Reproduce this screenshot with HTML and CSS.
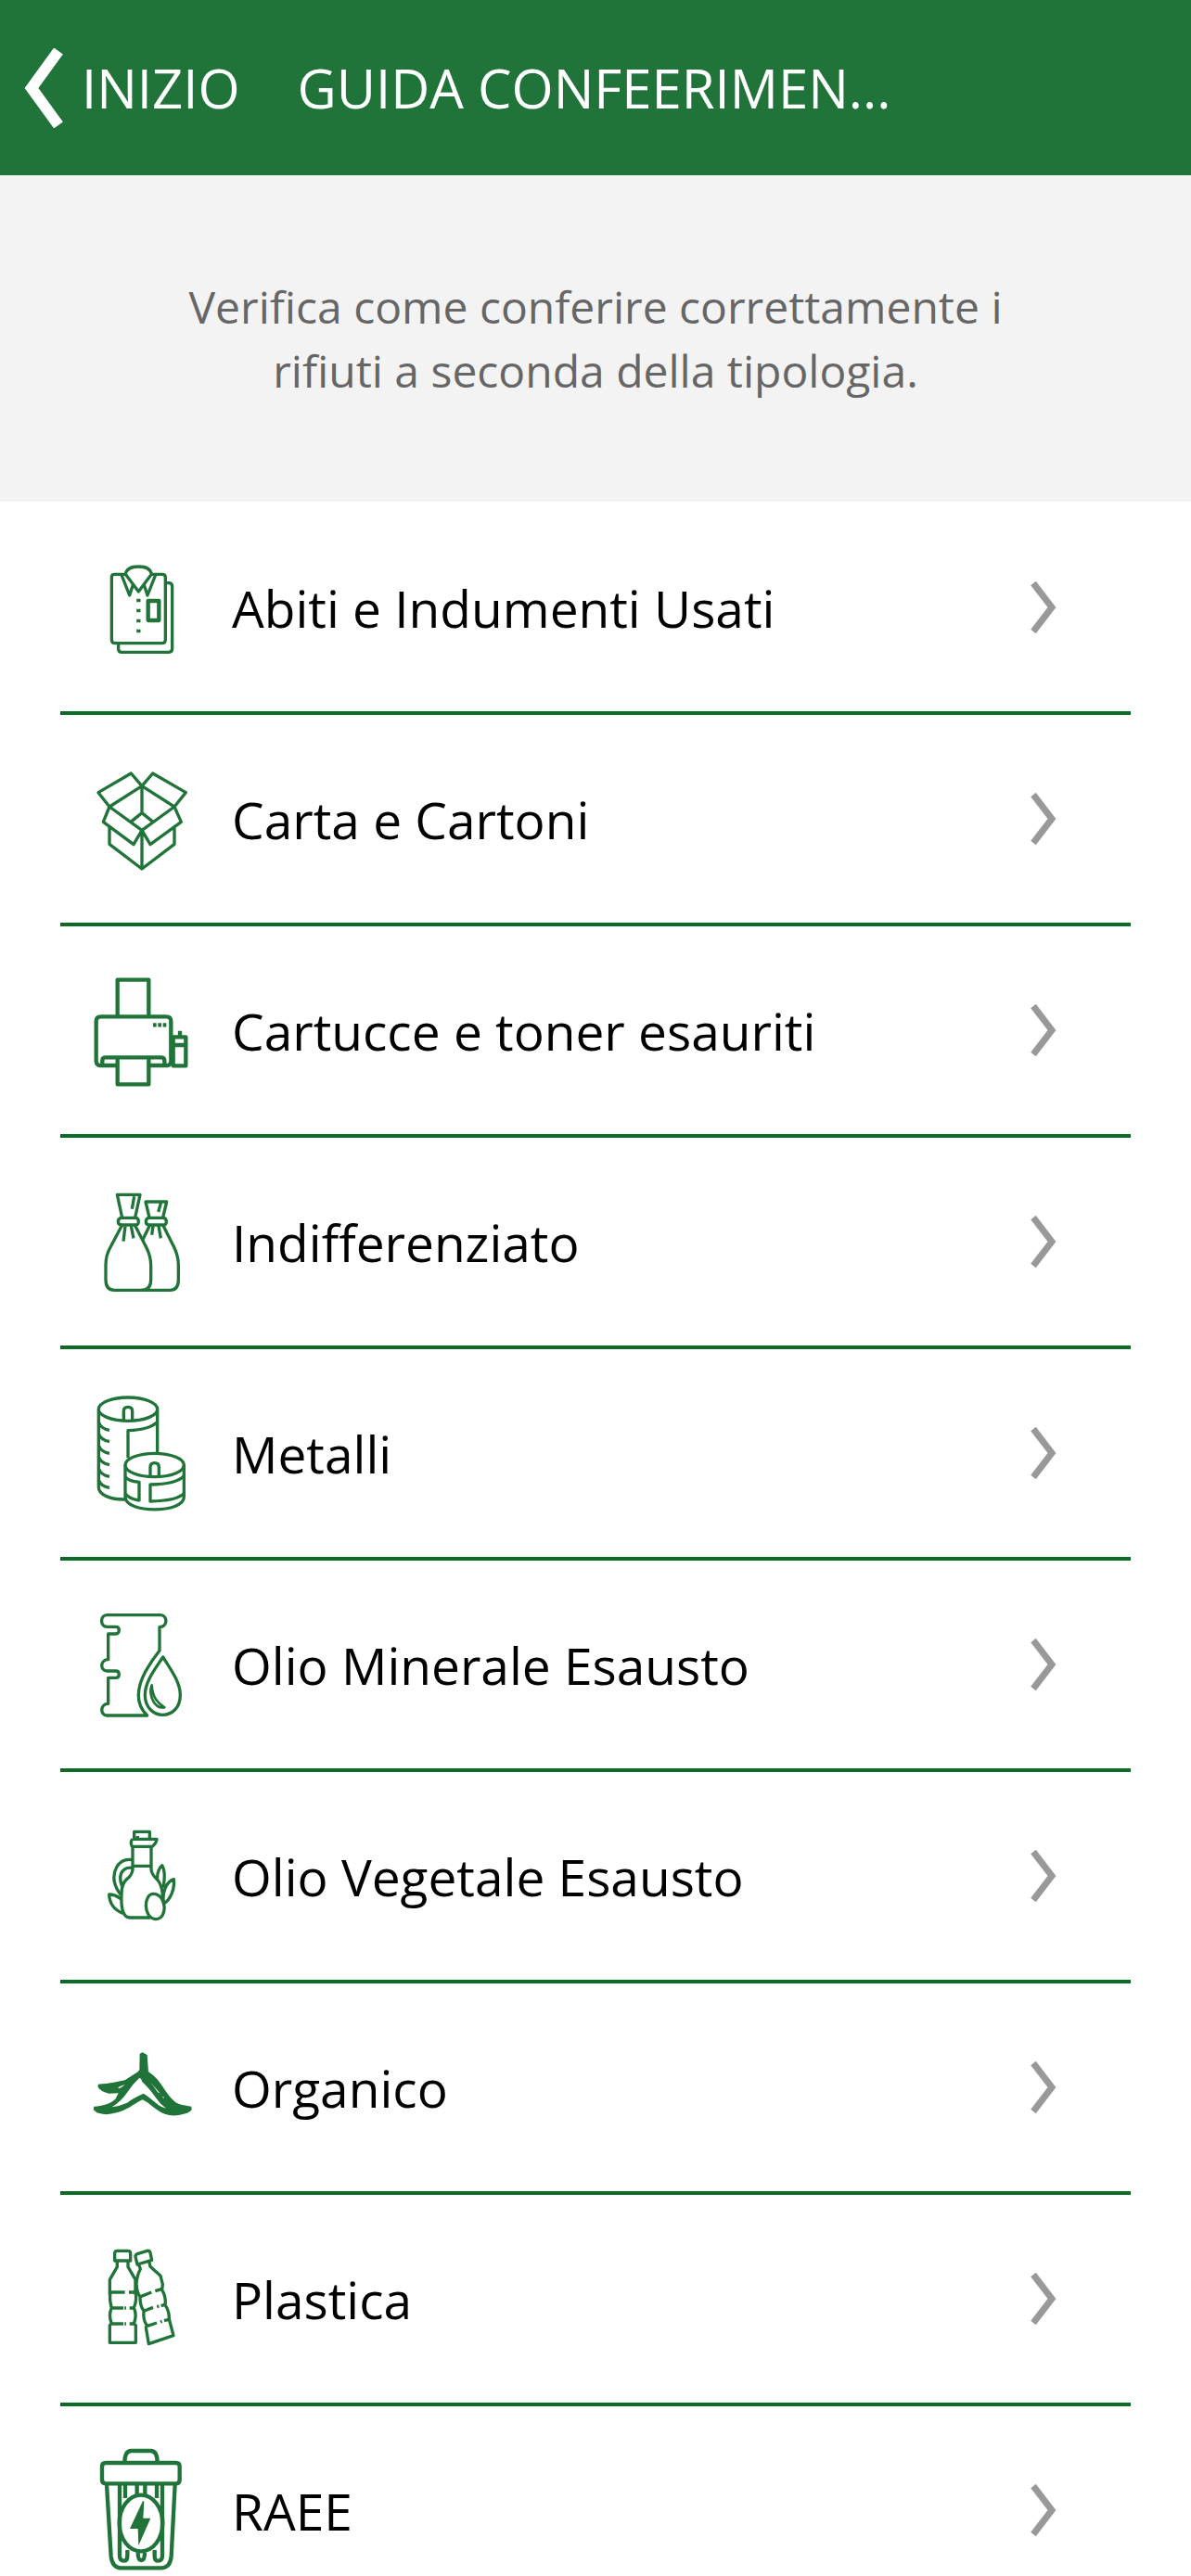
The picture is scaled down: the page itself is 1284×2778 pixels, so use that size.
FILE: index.html
```html
<!DOCTYPE html>
<html lang="it">
<head>
    <meta charset="UTF-8">
    <meta name="viewport" content="width=device-width, initial-scale=1.0">
    <title>Guida conferimento</title>
    <link rel="stylesheet" href="styles.css">
</head>
<body>

<!-- Barra superiore -->
<header class="topbar">
    <a class="back" href="#">
        <svg class="back-icon" viewBox="0 0 42 86" aria-hidden="true"><path d="M37 3L8 43L37 83"/></svg>
        INIZIO
    </a>
    <h1>GUIDA CONFEERIMEN...</h1>
</header>

<p class="intro">Verifica come conferire correttamente i rifiuti a seconda della tipologia.</p>

<!-- Elenco delle tipologie -->
<ul class="list">
    <li>
        <a class="item" href="#">
            <svg class="icon" viewBox="0 0 450 450" aria-hidden="true">
                <path d="M166 118H130Q121 118 121 128V330Q121 341 132 341H284Q295 341 295 330V128Q295 118 285 118H250"/>
                <path d="M297 146H306Q317 146 317 158V358Q317 370 306 370H154Q143 370 143 360V343"/>
                <path d="M166 118Q170 93 208 93T250 118L208 174ZM153 120L179 186L190 152M263 120L237 186L226 152"/>
                <path class="thick" d="M239 204H274V267H239Z"/>
                <path class="thick" d="M208 197V208M208 230V241M208 263V274M208 296V307"/>
            </svg>
            <span class="name">Abiti e Indumenti Usati</span>
            <svg class="arrow" viewBox="0 0 28 58" aria-hidden="true"><path d="M3 3L23 29L3 55"/></svg>
        </a>
    </li>
    <li>
        <a class="item" href="#">
            <svg class="icon" viewBox="0 -6 450 450" aria-hidden="true">
                <path d="M219 113L184 72L78 134L114 180L219 113L324 180L361 134L254 72L219 113V200M114 180L94 229L192 302L219 256L114 180M324 180L346 229L246 302L219 256L324 180M183 229L219 200L255 229M114 246V301L219 381L324 301V246M219 256V381"/>
            </svg>
            <span class="name">Carta e Cartoni</span>
            <svg class="arrow" viewBox="0 0 28 58" aria-hidden="true"><path d="M3 3L23 29L3 55"/></svg>
        </a>
    </li>
    <li>
        <a class="item" href="#">
            <svg class="icon thick" viewBox="0 -12 450 450" aria-hidden="true">
                <path d="M140 168V50H241V168M140 327H85Q71 327 71 312V184Q71 169 86 169H298Q313 169 313 184V312Q313 327 300 327H241"/>
                <path d="M91 325V311Q91 301 102 301H281Q292 301 292 311V325M140 302V388H241V302"/>
                <path d="M320 235H361V328H320ZM320 261H361M342 215V234M255 196H266M271 196H282M287 196H298"/>
            </svg>
            <span class="name">Cartucce e toner esauriti</span>
            <svg class="arrow" viewBox="0 0 28 58" aria-hidden="true"><path d="M3 3L23 29L3 55"/></svg>
        </a>
    </li>
    <li>
        <a class="item" href="#">
            <svg class="icon" viewBox="0 -3 450 450" aria-hidden="true">
                <path d="M155 144L139 70H213L197 144M194 76L187 116M153 145H198Q208 145 208 157T198 168H153Q142 168 142 157T153 145"/>
                <path d="M154 170L117 240Q102 266 102 298V345Q102 379 130 379H218Q248 379 248 345V298Q248 270 233 240L197 170M165 172L159 221M184 172L192 211"/>
                <path d="M243 144L231 93H299L287 144M280 98L272 126M242 145H287Q298 145 298 157T287 168H242Q232 168 232 157T242 145M244 170L220 219M288 170L323 240Q337 269 337 298V345Q337 379 310 379H218M255 172L251 200M273 172L280 211"/>
            </svg>
            <span class="name">Indifferenziato</span>
            <svg class="arrow" viewBox="0 0 28 58" aria-hidden="true"><path d="M3 3L23 29L3 55"/></svg>
        </a>
    </li>
    <li>
        <a class="item" href="#">
            <svg class="icon" viewBox="0 6 450 450" aria-hidden="true">
                <ellipse cx="174" cy="89" rx="95" ry="38"/>
                <path d="M79 89V342C79 366 118 382 164 381M269 89V232M174 247V158Q245 155 269 130M160 125V96Q160 82 174 82T188 96V125"/>
                <path d="M79 130Q85 152 114 157M79 167Q85 189 114 194M79 205Q85 227 114 232M79 242Q85 264 114 269M79 280Q85 302 114 307M79 317Q85 339 114 343"/>
                <ellipse cx="260" cy="270" rx="95" ry="38"/>
                <path d="M165 270V373C165 427 355 427 355 373V270M246 306V277Q246 263 260 263T274 277V306"/>
                <path d="M165 308Q176 322 210 325V384Q178 379 165 362M355 305Q330 332 246 333V387Q330 386 355 362"/>
            </svg>
            <span class="name">Metalli</span>
            <svg class="arrow" viewBox="0 0 28 58" aria-hidden="true"><path d="M3 3L23 29L3 55"/></svg>
        </a>
    </li>
    <li>
        <a class="item" href="#">
            <svg class="icon" viewBox="0 0 450 450" aria-hidden="true">
                <path d="M276 180V104C303 104 303 65 279 65H106C83 65 83 103 106 103H134Q145 103 145 114T134 126H110V209C83 209 83 246 106 246H134Q145 246 145 257T134 268H110V352C83 352 83 390 106 390H236C199 354 201 303 231 247Q250 213 276 180Z"/>
                <path d="M287 201C264 236 229 279 229 323C229 408 343 411 343 323C343 281 309 236 287 201Z"/>
                <path class="thin" d="M251 292C239 322 259 370 292 364C271 350 253 333 251 292Z"/>
            </svg>
            <span class="name">Olio Minerale Esausto</span>
            <svg class="arrow" viewBox="0 0 28 58" aria-hidden="true"><path d="M3 3L23 29L3 55"/></svg>
        </a>
    </li>
    <li>
        <a class="item" href="#">
            <svg class="icon" viewBox="0 -6 450 450" aria-hidden="true">
                <path d="M194 98V76H244V98M205 90V97M188 100H267Q267 111 253 124H187Q180 108 188 100M189 125V199Q187 215 173 227Q153 242 153 277Q151 319 159 337Q166 354 180 354H246M249 125V199Q251 215 268 230Q287 251 286 294M190 187H248"/>
                <path d="M188 167Q156 161 138 189Q114 232 150 280M188 193Q163 189 152 211Q145 228 155 253"/>
                <path d="M256 277C224 277 222 357 264 359C305 358 298 277 256 277ZM269 229C267 207 278 190 284 185C293 199 294 223 288 258M290 309C282 270 300 237 322 230C326 263 310 297 290 309M150 293Q133 279 113 279C114 311 132 330 158 340"/>
            </svg>
            <span class="name">Olio Vegetale Esausto</span>
            <svg class="arrow" viewBox="0 0 28 58" aria-hidden="true"><path d="M3 3L23 29L3 55"/></svg>
        </a>
    </li>
    <li>
        <a class="item" href="#">
            <svg class="icon" viewBox="0 3 450 450" aria-hidden="true">
                <path class="fill" d="M212 119L221 115L236 123L240 178Q260 189 281 218C303 250 320 280 350 285L379 290L380 301Q369 314 342 317Q315 323 293 314C263 304 247 280 221 268C193 282 169 303 137 310Q102 321 73 310L62 300L64 290C91 288 116 282 133 266L143 247L112 248Q88 243 77 228V218C116 216 144 209 165 204L206 178L211 172Z"/>
                <path class="hole" d="M211 197L217 202L219 209C239 227 251 243 264 262Q276 281 297 296Q280 293 262 277Q237 255 224 248Q190 263 171 278Q149 288 122 292Q153 272 171 245Q187 219 211 197ZM141 229L150 224L164 219L156 226L146 232ZM249 214L278 248L270 244ZM285 258L290 259L289 264Z"/>
            </svg>
            <span class="name">Organico</span>
            <svg class="arrow" viewBox="0 0 28 58" aria-hidden="true"><path d="M3 3L23 29L3 55"/></svg>
        </a>
    </li>
    <li>
        <a class="item" href="#">
            <svg class="icon" viewBox="0 12 450 450" aria-hidden="true">
                <path d="M131 90Q131 82 140 82H173Q182 82 182 90V114H131ZM139 116V134L115 175V214Q115 240 117 216Q113 241 121 266Q110 291 121 317L115 323V379H199V323L193 317Q204 291 193 266Q204 241 198 216V175L174 134V116"/>
                <path d="M119 216H164M177 216H196M122 267H159M163 267H168M179 267H192M122 318H159M163 318H168M179 318H192"/>
                <path d="M198 101Q197 95 204 92L236 82Q244 80 246 88L251 112L204 126ZM209 126L214 141Q202 164 201 189Q203 218 213 230Q212 259 225 276Q222 307 235 323L232 330L241 383L321 356L307 303Q308 278 294 257Q298 232 284 208L286 190L279 163L246 133L242 116"/>
                <path d="M215 230L250 216M262 212L284 205M227 276L255 265M268 263L274 261M281 260L293 256M237 325L267 315M279 312L284 310M291 308L306 304"/>
            </svg>
            <span class="name">Plastica</span>
            <svg class="arrow" viewBox="0 0 28 58" aria-hidden="true"><path d="M3 3L23 29L3 55"/></svg>
        </a>
    </li>
    <li>
        <a class="item" href="#">
            <svg class="icon thick" viewBox="0 12 450 450" aria-hidden="true">
                <path d="M163 82Q164 45 184 45H248Q268 45 269 82M102 84H330Q341 84 341 96V138Q341 151 330 151H102Q90 151 90 138V96Q90 84 102 84ZM105 153L119 386Q123 424 154 424H280Q311 424 314 386L326 153"/>
                <path d="M147 153V386Q148 401 160 401T172 386V366M165 153V198M203 153V188M229 153V188M267 153V198M285 153V386Q284 401 272 401T260 386V366M206 374Q206 399 217 399T228 374"/>
                <ellipse cx="216" cy="279" rx="70" ry="91"/>
                <path class="fill" d="M222 207L180 297H206L208 352L247 263H223L226 209Z"/>
            </svg>
            <span class="name">RAEE</span>
            <svg class="arrow" viewBox="0 0 28 58" aria-hidden="true"><path d="M3 3L23 29L3 55"/></svg>
        </a>
    </li>
</ul>

</body>
</html>
```
FILE: styles.css
```css
body {
    margin: 0;
    font-family: "Open Sans", "Noto Sans", sans-serif;
    background-color: #fff;
    color: #000;
}
a {
    color: inherit;
    text-decoration: none;
}
svg {
    flex: none;
    fill: none;
}
.topbar {
    display: flex;
    align-items: center;
    gap: 62px;
    height: 189px;
    padding: 0 26px;
    background-color: #217439;
    color: #fff;
    font-size: 58px;
    white-space: nowrap;
}
.back {
    display: flex;
    align-items: center;
    gap: 20px;
}
.back-icon {
    width: 42px;
    height: 86px;
    stroke: #fff;
    stroke-width: 12;
}
.topbar h1 {
    margin: 0;
    font-size: 58px;
    font-weight: 400;
}
.intro {
    margin: 0;
    padding: 107px 180px;
    background-color: #f3f3f3;
    color: #666;
    font-size: 48px;
    line-height: 69px;
    text-align: center;
}
.list {
    margin: 0;
    padding: 2px 65px 0;
    list-style: none;
}
.item {
    display: flex;
    align-items: center;
    gap: 20px;
    height: 224px;
    padding: 0 80px 0 15px;
    border-bottom: 4px solid #0b6a26;
}
.name {
    flex: 1;
    font-size: 55px;
}
.icon {
    width: 150px;
    height: 150px;
    stroke: #217439;
    stroke-width: 10;
    stroke-linejoin: round;
}
.thick {
    stroke-width: 13;
}
.thin {
    stroke-width: 8;
}
.fill {
    fill: #217439;
    stroke: none;
}
.hole {
    fill: #fff;
    stroke: none;
}
.arrow {
    width: 28px;
    height: 58px;
    stroke: #999;
    stroke-width: 7;
}
```
